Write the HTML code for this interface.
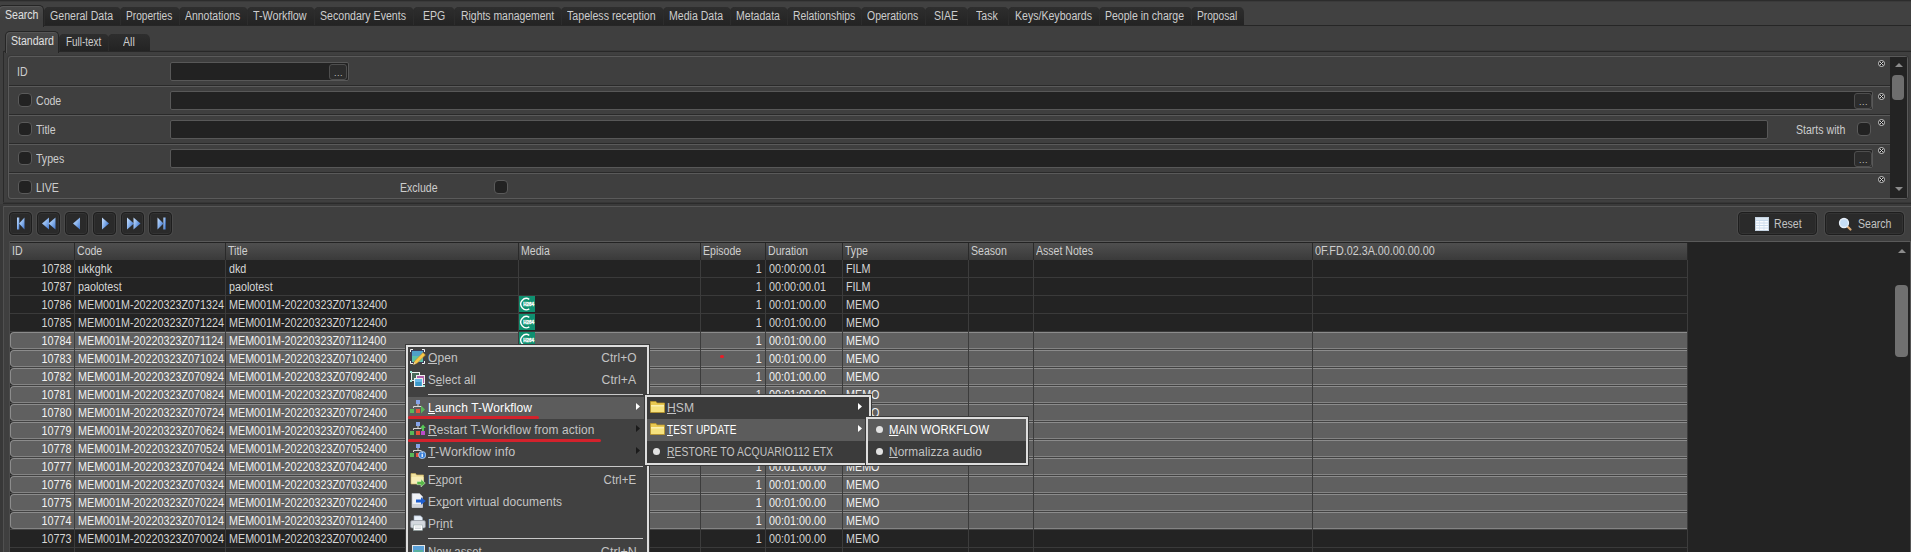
<!DOCTYPE html><html><head><meta charset="utf-8"><title>Search</title><style>
html,body{margin:0;padding:0}
body{width:1911px;height:552px;overflow:hidden;background:#3f3f3f;position:relative;font-family:"Liberation Sans",sans-serif;font-size:12px;color:#cdcdcd}
div,span{box-sizing:border-box}
.a{position:absolute}
.n{position:absolute;white-space:nowrap;transform:scaleX(.88);transform-origin:0 50%;line-height:14px;height:14px}
.r{transform-origin:100% 50%;text-align:right}
.d{transform:scaleX(.897)}
.tab{position:absolute;top:7px;height:18px;background:linear-gradient(#2e2e2e,#232323);border:none;border-radius:5px 5px 0 0;box-shadow:inset 1px 0 0 #2c2c2c}
.tabsel{position:absolute;background:linear-gradient(#4a4a4a,#3f3f3f 70%);border:1px solid #252525;border-bottom:none;border-radius:5px 5px 0 0;box-shadow:inset 1px 1px 0 #565656}
.inp{position:absolute;background:#222;border:1px solid #585858;border-radius:2px}
.db{position:absolute;width:18px;height:16px;background:#2c2c2c;border:1px solid #4e4e4e;border-radius:3px}
.dots{position:absolute;font-size:9px;line-height:10px;letter-spacing:.5px;color:#c4c4c4}
.cb{position:absolute;width:14px;height:14px;background:#222;border:1px solid #5a5a5a;border-radius:4px}
.btn{position:absolute;background:#2a2a2a;border:1px solid #1e1e1e;border-radius:4px;box-shadow:0 0 0 1px #4a4a4a,inset 0 0 0 1px #333}
.hl{position:absolute;height:1px}
.ul{position:absolute;top:16px;height:1px;background:currentColor}
.m{position:absolute;white-space:nowrap;font-size:12px;line-height:22px;height:22px;color:#d4d4d4;letter-spacing:.1px}
</style></head><body>
<div class="a" style="left:0;top:0;width:1911px;height:1px;background:#2c2c2c"></div><div class="a" style="left:0;top:1px;width:1911px;height:1px;background:#3a3a3a"></div><div class="a" style="left:0;top:2px;width:1911px;height:23px;background:#414141"></div>
<div class="a" style="left:0;top:25px;width:1911px;height:1px;background:#262626"></div>
<div class="tabsel" style="left:-2px;top:5px;width:46px;height:22px"></div>
<span class="n" style="left:5px;top:8px;color:#e0e0e0">Search</span>
<div class="tab" style="left:44px;width:77px"></div>
<span class="n" style="left:50px;top:9px;transform:scaleX(0.883)">General Data</span>
<div class="tab" style="left:120px;width:60px"></div>
<span class="n" style="left:126px;top:9px;transform:scaleX(0.845)">Properties</span>
<div class="tab" style="left:179px;width:69px"></div>
<span class="n" style="left:185px;top:9px;transform:scaleX(0.872)">Annotations</span>
<div class="tab" style="left:247px;width:68px"></div>
<span class="n" style="left:253px;top:9px;transform:scaleX(0.897)">T-Workflow</span>
<div class="tab" style="left:314px;width:100px"></div>
<span class="n" style="left:320px;top:9px;transform:scaleX(0.883)">Secondary Events</span>
<div class="tab" style="left:413px;width:42px"></div>
<span class="n" style="left:423px;top:9px;transform:scaleX(0.88)">EPG</span>
<div class="tab" style="left:454px;width:108px"></div>
<span class="n" style="left:461px;top:9px;transform:scaleX(0.868)">Rights management</span>
<div class="tab" style="left:561px;width:103px"></div>
<span class="n" style="left:567px;top:9px;transform:scaleX(0.886)">Tapeless reception</span>
<div class="tab" style="left:663px;width:68px"></div>
<span class="n" style="left:669px;top:9px;transform:scaleX(0.88)">Media Data</span>
<div class="tab" style="left:730px;width:58px"></div>
<span class="n" style="left:736px;top:9px;transform:scaleX(0.879)">Metadata</span>
<div class="tab" style="left:787px;width:75px"></div>
<span class="n" style="left:793px;top:9px;transform:scaleX(0.864)">Relationships</span>
<div class="tab" style="left:861px;width:65px"></div>
<span class="n" style="left:867px;top:9px;transform:scaleX(0.872)">Operations</span>
<div class="tab" style="left:925px;width:43px"></div>
<span class="n" style="left:934px;top:9px;transform:scaleX(0.88)">SIAE</span>
<div class="tab" style="left:967px;width:42px"></div>
<span class="n" style="left:976px;top:9px;transform:scaleX(0.88)">Task</span>
<div class="tab" style="left:1008px;width:92px"></div>
<span class="n" style="left:1015px;top:9px;transform:scaleX(0.881)">Keys/Keyboards</span>
<div class="tab" style="left:1099px;width:93px"></div>
<span class="n" style="left:1105px;top:9px;transform:scaleX(0.877)">People in charge</span>
<div class="tab" style="left:1191px;width:53px"></div>
<span class="n" style="left:1197px;top:9px;transform:scaleX(0.85)">Proposal</span>
<div class="a" style="left:3px;top:51px;width:1908px;height:1px;background:#282828"></div><div class="a" style="left:4px;top:50px;width:1907px;height:1px;background:#393939"></div>
<div class="a" style="left:3px;top:51px;width:1px;height:153px;background:#2a2a2a"></div>
<div class="tabsel" style="left:5px;top:31px;width:54px;height:22px"></div>
<span class="n" style="left:11px;top:34px;color:#e0e0e0">Standard</span>
<div class="tab" style="left:59px;top:34px;width:50px;height:17px"></div>
<span class="n" style="left:66px;top:35px;transform:scaleX(.825)">Full-text</span>
<div class="tab" style="left:108px;top:34px;width:42px;height:17px"></div>
<span class="n" style="left:123px;top:35px">All</span>
<div class="a" style="left:8px;top:56px;width:1900px;height:143px;border:1px solid #5a5a5a;border-radius:3px;box-shadow:0 0 0 1px #383838"></div>
<div class="a" style="left:9px;top:85px;width:1881px;height:1px;background:#2a2a2a"></div>
<div class="a" style="left:9px;top:86px;width:1881px;height:1px;background:#5a5a5a"></div>
<div class="a" style="left:9px;top:114px;width:1881px;height:1px;background:#2a2a2a"></div>
<div class="a" style="left:9px;top:115px;width:1881px;height:1px;background:#5a5a5a"></div>
<div class="a" style="left:9px;top:143px;width:1881px;height:1px;background:#2a2a2a"></div>
<div class="a" style="left:9px;top:144px;width:1881px;height:1px;background:#5a5a5a"></div>
<div class="a" style="left:9px;top:172px;width:1881px;height:1px;background:#2a2a2a"></div>
<div class="a" style="left:9px;top:173px;width:1881px;height:1px;background:#5a5a5a"></div>
<span class="n" style="left:17px;top:65px">ID</span>
<div class="cb" style="left:18px;top:93px"></div>
<span class="n" style="left:36px;top:94px">Code</span>
<div class="cb" style="left:18px;top:122px"></div>
<span class="n" style="left:36px;top:123px">Title</span>
<div class="cb" style="left:18px;top:151px"></div>
<span class="n" style="left:36px;top:152px">Types</span>
<div class="cb" style="left:18px;top:180px"></div>
<span class="n" style="left:36px;top:181px">LIVE</span>
<div class="inp" style="left:170px;top:62px;width:179px;height:19px"></div>
<div class="db" style="left:329px;top:63.5px"></div><span class="dots" style="left:334px;top:68px">...</span>
<div class="inp" style="left:170px;top:91px;width:1703px;height:19px"></div>
<div class="db" style="left:1854px;top:92.5px"></div><span class="dots" style="left:1859px;top:97px">...</span>
<div class="inp" style="left:170px;top:120px;width:1598px;height:19px"></div>
<span class="n" style="left:1796px;top:123px">Starts with</span>
<div class="cb" style="left:1856.500px;top:122px"></div>
<div class="inp" style="left:170px;top:149px;width:1703px;height:19px"></div>
<div class="db" style="left:1854px;top:150.5px"></div><span class="dots" style="left:1859px;top:155px">...</span>
<span class="n" style="left:400px;top:181px">Exclude</span>
<div class="cb" style="left:494px;top:180px"></div>
<svg class="a" style="left:1877.500px;top:60px" width="7" height="7" viewBox="0 0 7 7"><circle cx="3.500" cy="3.500" r="3" fill="#1a1a1a" stroke="#dcdcdc" stroke-width=".9"/><path d="M2 2L5 5M5 2L2 5" stroke="#dcdcdc" stroke-width=".9"/></svg>
<svg class="a" style="left:1877.500px;top:93px" width="7" height="7" viewBox="0 0 7 7"><circle cx="3.500" cy="3.500" r="3" fill="#1a1a1a" stroke="#dcdcdc" stroke-width=".9"/><path d="M2 2L5 5M5 2L2 5" stroke="#dcdcdc" stroke-width=".9"/></svg>
<svg class="a" style="left:1877.500px;top:119px" width="7" height="7" viewBox="0 0 7 7"><circle cx="3.500" cy="3.500" r="3" fill="#1a1a1a" stroke="#dcdcdc" stroke-width=".9"/><path d="M2 2L5 5M5 2L2 5" stroke="#dcdcdc" stroke-width=".9"/></svg>
<svg class="a" style="left:1877.500px;top:147px" width="7" height="7" viewBox="0 0 7 7"><circle cx="3.500" cy="3.500" r="3" fill="#1a1a1a" stroke="#dcdcdc" stroke-width=".9"/><path d="M2 2L5 5M5 2L2 5" stroke="#dcdcdc" stroke-width=".9"/></svg>
<svg class="a" style="left:1877.500px;top:176px" width="7" height="7" viewBox="0 0 7 7"><circle cx="3.500" cy="3.500" r="3" fill="#1a1a1a" stroke="#dcdcdc" stroke-width=".9"/><path d="M2 2L5 5M5 2L2 5" stroke="#dcdcdc" stroke-width=".9"/></svg>
<div class="a" style="left:1890px;top:57px;width:17px;height:141px;background:#232323"></div>
<div class="a" style="left:1892px;top:75px;width:12px;height:25px;background:#6e6e6e;border-radius:4px"></div>
<svg class="a" style="left:1895px;top:63px" width="8" height="4"><path d="M0 4L4 0L8 4z" fill="#8c8c8c"/></svg>
<svg class="a" style="left:1895px;top:187px" width="8" height="4"><path d="M0 0L4 4L8 0z" fill="#8c8c8c"/></svg>
<div class="a" style="left:3px;top:202px;width:1908px;height:1px;background:#363636"></div><div class="a" style="left:3px;top:203px;width:1908px;height:1px;background:#2b2b2b"></div><div class="a" style="left:0;top:204px;width:1911px;height:2px;background:#3a3a3a"></div>
<div class="a" style="left:3px;top:206px;width:1908px;height:1px;background:#565656"></div><div class="a" style="left:3px;top:206px;width:1px;height:346px;background:#505050"></div><div class="a" style="left:0;top:206px;width:3px;height:346px;background:#383838"></div>
<div class="btn" style="left:9px;top:212px;width:23px;height:23px"></div>
<div class="btn" style="left:37px;top:212px;width:23px;height:23px"></div>
<div class="btn" style="left:65px;top:212px;width:23px;height:23px"></div>
<div class="btn" style="left:93px;top:212px;width:23px;height:23px"></div>
<div class="btn" style="left:121px;top:212px;width:23px;height:23px"></div>
<div class="btn" style="left:149px;top:212px;width:23px;height:23px"></div>
<svg class="a" style="left:0;top:212px" width="180" height="23" viewBox="0 0 180 23"><defs><linearGradient id="gl" x1="0" y1="0" x2="1" y2="1"><stop offset="0" stop-color="#c4dcfa"/><stop offset=".5" stop-color="#8db6ee"/><stop offset="1" stop-color="#3f74cc"/></linearGradient><linearGradient id="gr" x1="0" y1="0" x2="1" y2=".6"><stop offset="0" stop-color="#cfe2fb"/><stop offset=".45" stop-color="#8db6ee"/><stop offset="1" stop-color="#3f74cc"/></linearGradient></defs><g transform="translate(0,.5)"><path d="M17 5h2.300v12H17z" fill="url(#gl)"/><path d="M19 11l5.500-6v12z" fill="url(#gl)"/><path d="M42 11l7-6v12z" fill="url(#gl)"/><path d="M48.500 11l7-6v12z" fill="url(#gl)"/><path d="M73 11l7-6v12z" fill="url(#gl)"/><path d="M109 11l-7-6v12z" fill="url(#gr)"/><path d="M134 11l-7-6v12z" fill="url(#gr)"/><path d="M140.500 11l-7-6v12z" fill="url(#gr)"/><path d="M163.400 5h2.300v12h-2.300z" fill="url(#gr)"/><path d="M163.500 11l-6-6v12z" fill="url(#gr)"/></g></svg>
<div class="btn" style="left:1738px;top:212px;width:79px;height:23px"></div>
<svg class="a" style="left:1755px;top:217px" width="14" height="14" viewBox="0 0 14 14"><rect x=".5" y=".5" width="13" height="13" fill="#fafcff" stroke="#c4d2e0"/><path d="M1 3.500h12M1 6h12M1 8.500h12M1 11h12" stroke="#bcd0e6" stroke-width=".8"/><path d="M4.500 3.500v10M9 3.500v10" stroke="#d0deee" stroke-width=".7"/><rect x="1" y="1" width="12" height="2" fill="#dbe7f3"/></svg>
<span class="n" style="left:1774px;top:217px;color:#c2c2c2">Reset</span>
<div class="btn" style="left:1825px;top:212px;width:79px;height:23px"></div>
<svg class="a" style="left:1838px;top:217px" width="15" height="15" viewBox="0 0 15 15"><path d="M9.500 9.500l3 3" stroke="#dba873" stroke-width="2.200" stroke-linecap="round"/><circle cx="6" cy="6" r="4.500" fill="#c6ddf4" stroke="#e6eff9" stroke-width="1.300"/></svg>
<span class="n" style="left:1858px;top:217px;color:#c2c2c2">Search</span>
<div class="a" style="left:10px;top:242px;width:1900px;height:310px;background:#232323"></div>
<div class="a" style="left:9px;top:241px;width:1902px;height:1px;background:#5a5a5a"></div>
<div class="a" style="left:9px;top:241px;width:1px;height:311px;background:#4a4a4a"></div>
<div class="a" style="left:10px;top:243px;width:1678px;height:17px;background:linear-gradient(#4f4f4f,#3a3a3a)"></div>
<div class="a" style="left:74px;top:243px;width:1px;height:17px;background:#2a2a2a"></div>
<span class="n" style="left:12px;top:244px;color:#cfcfcf">ID</span>
<div class="a" style="left:225px;top:243px;width:1px;height:17px;background:#2a2a2a"></div>
<span class="n" style="left:77px;top:244px;color:#cfcfcf">Code</span>
<div class="a" style="left:518px;top:243px;width:1px;height:17px;background:#2a2a2a"></div>
<span class="n" style="left:228px;top:244px;color:#cfcfcf">Title</span>
<div class="a" style="left:700px;top:243px;width:1px;height:17px;background:#2a2a2a"></div>
<span class="n" style="left:521px;top:244px;color:#cfcfcf">Media</span>
<div class="a" style="left:765px;top:243px;width:1px;height:17px;background:#2a2a2a"></div>
<span class="n" style="left:703px;top:244px;color:#cfcfcf">Episode</span>
<div class="a" style="left:842px;top:243px;width:1px;height:17px;background:#2a2a2a"></div>
<span class="n" style="left:768px;top:244px;color:#cfcfcf">Duration</span>
<div class="a" style="left:968px;top:243px;width:1px;height:17px;background:#2a2a2a"></div>
<span class="n" style="left:845px;top:244px;color:#cfcfcf">Type</span>
<div class="a" style="left:1033px;top:243px;width:1px;height:17px;background:#2a2a2a"></div>
<span class="n" style="left:971px;top:244px;color:#cfcfcf">Season</span>
<div class="a" style="left:1312px;top:243px;width:1px;height:17px;background:#2a2a2a"></div>
<span class="n" style="left:1036px;top:244px;color:#cfcfcf">Asset Notes</span>
<div class="a" style="left:1687px;top:243px;width:1px;height:17px;background:#2a2a2a"></div>
<span class="n d" style="left:1315px;top:244px;color:#cfcfcf">0F.FD.02.3A.00.00.00.00</span>
<div class="a" style="left:10px;top:277px;width:1678px;height:1px;background:#3a3a3a"></div>
<span class="n d r" style="right:1840px;top:262px;color:#d6d6d6">10788</span>
<span class="n d" style="left:78px;top:262px;color:#d6d6d6;width:164px;overflow:hidden">ukkghk</span>
<span class="n d" style="left:229px;top:262px;color:#d6d6d6">dkd</span>
<span class="n d r" style="right:1149px;top:262px;color:#d6d6d6">1</span>
<span class="n d" style="left:769px;top:262px;color:#d6d6d6">00:00:00.01</span>
<span class="n d" style="left:846px;top:262px;color:#d6d6d6">FILM</span>
<div class="a" style="left:10px;top:295px;width:1678px;height:1px;background:#3a3a3a"></div>
<span class="n d r" style="right:1840px;top:280px;color:#d6d6d6">10787</span>
<span class="n d" style="left:78px;top:280px;color:#d6d6d6;width:164px;overflow:hidden">paolotest</span>
<span class="n d" style="left:229px;top:280px;color:#d6d6d6">paolotest</span>
<span class="n d r" style="right:1149px;top:280px;color:#d6d6d6">1</span>
<span class="n d" style="left:769px;top:280px;color:#d6d6d6">00:00:00.01</span>
<span class="n d" style="left:846px;top:280px;color:#d6d6d6">FILM</span>
<div class="a" style="left:10px;top:313px;width:1678px;height:1px;background:#3a3a3a"></div>
<span class="n d r" style="right:1840px;top:298px;color:#d6d6d6">10786</span>
<span class="n d" style="left:78px;top:298px;color:#d6d6d6;width:164px;overflow:hidden">MEM001M-20220323Z071324</span>
<span class="n d" style="left:229px;top:298px;color:#d6d6d6">MEM001M-20220323Z07132400</span>
<span class="n d r" style="right:1149px;top:298px;color:#d6d6d6">1</span>
<span class="n d" style="left:769px;top:298px;color:#d6d6d6">00:01:00.00</span>
<span class="n d" style="left:846px;top:298px;color:#d6d6d6">MEMO</span>
<svg class="a" style="left:519px;top:296px" width="16" height="16" viewBox="0 0 16 16"><rect width="16" height="16" fill="#0f9070"/><path d="M10.300 3.300A5.600 5.600 0 1 0 10.300 12.900" fill="none" stroke="#fff" stroke-width="1.400"/><text x="4.300" y="10.100" font-size="5.600" font-weight="bold" fill="#fff" stroke="#fff" stroke-width=".35" font-family="Liberation Sans,sans-serif" textLength="10.800" lengthAdjust="spacingAndGlyphs">H264</text></svg>
<div class="a" style="left:10px;top:331px;width:1678px;height:1px;background:#3a3a3a"></div>
<span class="n d r" style="right:1840px;top:316px;color:#d6d6d6">10785</span>
<span class="n d" style="left:78px;top:316px;color:#d6d6d6;width:164px;overflow:hidden">MEM001M-20220323Z071224</span>
<span class="n d" style="left:229px;top:316px;color:#d6d6d6">MEM001M-20220323Z07122400</span>
<span class="n d r" style="right:1149px;top:316px;color:#d6d6d6">1</span>
<span class="n d" style="left:769px;top:316px;color:#d6d6d6">00:01:00.00</span>
<span class="n d" style="left:846px;top:316px;color:#d6d6d6">MEMO</span>
<svg class="a" style="left:519px;top:314px" width="16" height="16" viewBox="0 0 16 16"><rect width="16" height="16" fill="#0f9070"/><path d="M10.300 3.300A5.600 5.600 0 1 0 10.300 12.900" fill="none" stroke="#fff" stroke-width="1.400"/><text x="4.300" y="10.100" font-size="5.600" font-weight="bold" fill="#fff" stroke="#fff" stroke-width=".35" font-family="Liberation Sans,sans-serif" textLength="10.800" lengthAdjust="spacingAndGlyphs">H264</text></svg>
<div class="a" style="left:10px;top:332px;width:1678px;height:17px;background:#606060;border-top:1px solid #8c8c8c;border-bottom:1px solid #848484;border-left:1px solid #8c8c8c;border-radius:4px 0 0 4px"></div>
<div class="a" style="left:10px;top:349px;width:1678px;height:1px;background:#424242"></div>
<span class="n d r" style="right:1840px;top:334px;color:#f2f2f2">10784</span>
<span class="n d" style="left:78px;top:334px;color:#f2f2f2;width:164px;overflow:hidden">MEM001M-20220323Z071124</span>
<span class="n d" style="left:229px;top:334px;color:#f2f2f2">MEM001M-20220323Z07112400</span>
<span class="n d r" style="right:1149px;top:334px;color:#f2f2f2">1</span>
<span class="n d" style="left:769px;top:334px;color:#f2f2f2">00:01:00.00</span>
<span class="n d" style="left:846px;top:334px;color:#f2f2f2">MEMO</span>
<svg class="a" style="left:519px;top:332px" width="16" height="16" viewBox="0 0 16 16"><rect width="16" height="16" fill="#0f9070"/><path d="M10.300 3.300A5.600 5.600 0 1 0 10.300 12.900" fill="none" stroke="#fff" stroke-width="1.400"/><text x="4.300" y="10.100" font-size="5.600" font-weight="bold" fill="#fff" stroke="#fff" stroke-width=".35" font-family="Liberation Sans,sans-serif" textLength="10.800" lengthAdjust="spacingAndGlyphs">H264</text></svg>
<div class="a" style="left:10px;top:350px;width:1678px;height:17px;background:#606060;border-top:1px solid #8c8c8c;border-bottom:1px solid #848484;border-left:1px solid #8c8c8c;border-radius:4px 0 0 4px"></div>
<div class="a" style="left:10px;top:367px;width:1678px;height:1px;background:#424242"></div>
<span class="n d r" style="right:1840px;top:352px;color:#f2f2f2">10783</span>
<span class="n d" style="left:78px;top:352px;color:#f2f2f2;width:164px;overflow:hidden">MEM001M-20220323Z071024</span>
<span class="n d" style="left:229px;top:352px;color:#f2f2f2">MEM001M-20220323Z07102400</span>
<span class="n d r" style="right:1149px;top:352px;color:#f2f2f2">1</span>
<span class="n d" style="left:769px;top:352px;color:#f2f2f2">00:01:00.00</span>
<span class="n d" style="left:846px;top:352px;color:#f2f2f2">MEMO</span>
<div class="a" style="left:10px;top:368px;width:1678px;height:17px;background:#606060;border-top:1px solid #8c8c8c;border-bottom:1px solid #848484;border-left:1px solid #8c8c8c;border-radius:4px 0 0 4px"></div>
<div class="a" style="left:10px;top:385px;width:1678px;height:1px;background:#424242"></div>
<span class="n d r" style="right:1840px;top:370px;color:#f2f2f2">10782</span>
<span class="n d" style="left:78px;top:370px;color:#f2f2f2;width:164px;overflow:hidden">MEM001M-20220323Z070924</span>
<span class="n d" style="left:229px;top:370px;color:#f2f2f2">MEM001M-20220323Z07092400</span>
<span class="n d r" style="right:1149px;top:370px;color:#f2f2f2">1</span>
<span class="n d" style="left:769px;top:370px;color:#f2f2f2">00:01:00.00</span>
<span class="n d" style="left:846px;top:370px;color:#f2f2f2">MEMO</span>
<div class="a" style="left:10px;top:386px;width:1678px;height:17px;background:#606060;border-top:1px solid #8c8c8c;border-bottom:1px solid #848484;border-left:1px solid #8c8c8c;border-radius:4px 0 0 4px"></div>
<div class="a" style="left:10px;top:403px;width:1678px;height:1px;background:#424242"></div>
<span class="n d r" style="right:1840px;top:388px;color:#f2f2f2">10781</span>
<span class="n d" style="left:78px;top:388px;color:#f2f2f2;width:164px;overflow:hidden">MEM001M-20220323Z070824</span>
<span class="n d" style="left:229px;top:388px;color:#f2f2f2">MEM001M-20220323Z07082400</span>
<span class="n d r" style="right:1149px;top:388px;color:#f2f2f2">1</span>
<span class="n d" style="left:769px;top:388px;color:#f2f2f2">00:01:00.00</span>
<span class="n d" style="left:846px;top:388px;color:#f2f2f2">MEMO</span>
<div class="a" style="left:10px;top:404px;width:1678px;height:17px;background:#606060;border-top:1px solid #8c8c8c;border-bottom:1px solid #848484;border-left:1px solid #8c8c8c;border-radius:4px 0 0 4px"></div>
<div class="a" style="left:10px;top:421px;width:1678px;height:1px;background:#424242"></div>
<span class="n d r" style="right:1840px;top:406px;color:#f2f2f2">10780</span>
<span class="n d" style="left:78px;top:406px;color:#f2f2f2;width:164px;overflow:hidden">MEM001M-20220323Z070724</span>
<span class="n d" style="left:229px;top:406px;color:#f2f2f2">MEM001M-20220323Z07072400</span>
<span class="n d r" style="right:1149px;top:406px;color:#f2f2f2">1</span>
<span class="n d" style="left:769px;top:406px;color:#f2f2f2">00:01:00.00</span>
<span class="n d" style="left:846px;top:406px;color:#f2f2f2">MEMO</span>
<div class="a" style="left:10px;top:422px;width:1678px;height:17px;background:#606060;border-top:1px solid #8c8c8c;border-bottom:1px solid #848484;border-left:1px solid #8c8c8c;border-radius:4px 0 0 4px"></div>
<div class="a" style="left:10px;top:439px;width:1678px;height:1px;background:#424242"></div>
<span class="n d r" style="right:1840px;top:424px;color:#f2f2f2">10779</span>
<span class="n d" style="left:78px;top:424px;color:#f2f2f2;width:164px;overflow:hidden">MEM001M-20220323Z070624</span>
<span class="n d" style="left:229px;top:424px;color:#f2f2f2">MEM001M-20220323Z07062400</span>
<span class="n d r" style="right:1149px;top:424px;color:#f2f2f2">1</span>
<span class="n d" style="left:769px;top:424px;color:#f2f2f2">00:01:00.00</span>
<span class="n d" style="left:846px;top:424px;color:#f2f2f2">MEMO</span>
<div class="a" style="left:10px;top:440px;width:1678px;height:17px;background:#606060;border-top:1px solid #8c8c8c;border-bottom:1px solid #848484;border-left:1px solid #8c8c8c;border-radius:4px 0 0 4px"></div>
<div class="a" style="left:10px;top:457px;width:1678px;height:1px;background:#424242"></div>
<span class="n d r" style="right:1840px;top:442px;color:#f2f2f2">10778</span>
<span class="n d" style="left:78px;top:442px;color:#f2f2f2;width:164px;overflow:hidden">MEM001M-20220323Z070524</span>
<span class="n d" style="left:229px;top:442px;color:#f2f2f2">MEM001M-20220323Z07052400</span>
<span class="n d r" style="right:1149px;top:442px;color:#f2f2f2">1</span>
<span class="n d" style="left:769px;top:442px;color:#f2f2f2">00:01:00.00</span>
<span class="n d" style="left:846px;top:442px;color:#f2f2f2">MEMO</span>
<div class="a" style="left:10px;top:458px;width:1678px;height:17px;background:#606060;border-top:1px solid #8c8c8c;border-bottom:1px solid #848484;border-left:1px solid #8c8c8c;border-radius:4px 0 0 4px"></div>
<div class="a" style="left:10px;top:475px;width:1678px;height:1px;background:#424242"></div>
<span class="n d r" style="right:1840px;top:460px;color:#f2f2f2">10777</span>
<span class="n d" style="left:78px;top:460px;color:#f2f2f2;width:164px;overflow:hidden">MEM001M-20220323Z070424</span>
<span class="n d" style="left:229px;top:460px;color:#f2f2f2">MEM001M-20220323Z07042400</span>
<span class="n d r" style="right:1149px;top:460px;color:#f2f2f2">1</span>
<span class="n d" style="left:769px;top:460px;color:#f2f2f2">00:01:00.00</span>
<span class="n d" style="left:846px;top:460px;color:#f2f2f2">MEMO</span>
<div class="a" style="left:10px;top:476px;width:1678px;height:17px;background:#606060;border-top:1px solid #8c8c8c;border-bottom:1px solid #848484;border-left:1px solid #8c8c8c;border-radius:4px 0 0 4px"></div>
<div class="a" style="left:10px;top:493px;width:1678px;height:1px;background:#424242"></div>
<span class="n d r" style="right:1840px;top:478px;color:#f2f2f2">10776</span>
<span class="n d" style="left:78px;top:478px;color:#f2f2f2;width:164px;overflow:hidden">MEM001M-20220323Z070324</span>
<span class="n d" style="left:229px;top:478px;color:#f2f2f2">MEM001M-20220323Z07032400</span>
<span class="n d r" style="right:1149px;top:478px;color:#f2f2f2">1</span>
<span class="n d" style="left:769px;top:478px;color:#f2f2f2">00:01:00.00</span>
<span class="n d" style="left:846px;top:478px;color:#f2f2f2">MEMO</span>
<div class="a" style="left:10px;top:494px;width:1678px;height:17px;background:#606060;border-top:1px solid #8c8c8c;border-bottom:1px solid #848484;border-left:1px solid #8c8c8c;border-radius:4px 0 0 4px"></div>
<div class="a" style="left:10px;top:511px;width:1678px;height:1px;background:#424242"></div>
<span class="n d r" style="right:1840px;top:496px;color:#f2f2f2">10775</span>
<span class="n d" style="left:78px;top:496px;color:#f2f2f2;width:164px;overflow:hidden">MEM001M-20220323Z070224</span>
<span class="n d" style="left:229px;top:496px;color:#f2f2f2">MEM001M-20220323Z07022400</span>
<span class="n d r" style="right:1149px;top:496px;color:#f2f2f2">1</span>
<span class="n d" style="left:769px;top:496px;color:#f2f2f2">00:01:00.00</span>
<span class="n d" style="left:846px;top:496px;color:#f2f2f2">MEMO</span>
<div class="a" style="left:10px;top:512px;width:1678px;height:17px;background:#606060;border-top:1px solid #8c8c8c;border-bottom:1px solid #848484;border-left:1px solid #8c8c8c;border-radius:4px 0 0 4px"></div>
<div class="a" style="left:10px;top:529px;width:1678px;height:1px;background:#424242"></div>
<span class="n d r" style="right:1840px;top:514px;color:#f2f2f2">10774</span>
<span class="n d" style="left:78px;top:514px;color:#f2f2f2;width:164px;overflow:hidden">MEM001M-20220323Z070124</span>
<span class="n d" style="left:229px;top:514px;color:#f2f2f2">MEM001M-20220323Z07012400</span>
<span class="n d r" style="right:1149px;top:514px;color:#f2f2f2">1</span>
<span class="n d" style="left:769px;top:514px;color:#f2f2f2">00:01:00.00</span>
<span class="n d" style="left:846px;top:514px;color:#f2f2f2">MEMO</span>
<div class="a" style="left:10px;top:547px;width:1678px;height:1px;background:#3a3a3a"></div>
<span class="n d r" style="right:1840px;top:532px;color:#d6d6d6">10773</span>
<span class="n d" style="left:78px;top:532px;color:#d6d6d6;width:164px;overflow:hidden">MEM001M-20220323Z070024</span>
<span class="n d" style="left:229px;top:532px;color:#d6d6d6">MEM001M-20220323Z07002400</span>
<span class="n d r" style="right:1149px;top:532px;color:#d6d6d6">1</span>
<span class="n d" style="left:769px;top:532px;color:#d6d6d6">00:01:00.00</span>
<span class="n d" style="left:846px;top:532px;color:#d6d6d6">MEMO</span>
<div class="a" style="left:10px;top:565px;width:1678px;height:1px;background:#3a3a3a"></div>
<span class="n d r" style="right:1840px;top:550px;color:#d6d6d6">10772</span>
<span class="n d" style="left:78px;top:550px;color:#d6d6d6;width:164px;overflow:hidden">MEM001M-20220323Z065924</span>
<span class="n d" style="left:229px;top:550px;color:#d6d6d6">MEM001M-20220323Z06592400</span>
<span class="n d r" style="right:1149px;top:550px;color:#d6d6d6">1</span>
<span class="n d" style="left:769px;top:550px;color:#d6d6d6">00:01:00.00</span>
<span class="n d" style="left:846px;top:550px;color:#d6d6d6">MEMO</span>
<div class="a" style="left:74px;top:260px;width:1px;height:292px;background:#3c3c3c"></div>
<div class="a" style="left:225px;top:260px;width:1px;height:292px;background:#3c3c3c"></div>
<div class="a" style="left:518px;top:260px;width:1px;height:292px;background:#3c3c3c"></div>
<div class="a" style="left:700px;top:260px;width:1px;height:292px;background:#3c3c3c"></div>
<div class="a" style="left:765px;top:260px;width:1px;height:292px;background:#3c3c3c"></div>
<div class="a" style="left:842px;top:260px;width:1px;height:292px;background:#3c3c3c"></div>
<div class="a" style="left:968px;top:260px;width:1px;height:292px;background:#3c3c3c"></div>
<div class="a" style="left:1033px;top:260px;width:1px;height:292px;background:#3c3c3c"></div>
<div class="a" style="left:1312px;top:260px;width:1px;height:292px;background:#3c3c3c"></div>
<div class="a" style="left:1687px;top:260px;width:1px;height:292px;background:#3c3c3c"></div>
<div class="a" style="left:1910px;top:241px;width:1px;height:311px;background:#555"></div>
<svg class="a" style="left:1898px;top:248.500px" width="8" height="4"><path d="M0 4L4 0L8 4z" fill="#8c8c8c"/></svg>
<div class="a" style="left:1895px;top:285px;width:13px;height:72px;background:#707070;border-radius:4px"></div>
<div class="a" style="left:406px;top:345px;width:243px;height:220px;background:#414141;border:2px solid #dedede;box-shadow:0 0 0 1px #3a3a3a"></div>
<div class="a" style="left:408px;top:397px;width:237px;height:22px;background:#5c5c5c"></div>
<div class="a" style="left:428px;top:394px;width:215px;height:1px;background:#c8c8c8"></div>
<div class="a" style="left:428px;top:466px;width:215px;height:1px;background:#c8c8c8"></div>
<div class="a" style="left:428px;top:538px;width:215px;height:1px;background:#c8c8c8"></div>
<span class="m" style="left:428px;top:347px;color:#c4c4c4;transform:scaleX(1.0);transform-origin:0 50%">Open<i class="ul" style="left:0px;width:9.34px"></i></span>
<span class="m" style="right:1274.5px;top:347px;color:#c4c4c4;transform:scaleX(0.994);transform-origin:100% 50%">Ctrl+O</span>
<span class="m" style="left:428px;top:369px;color:#c4c4c4;transform:scaleX(0.965);transform-origin:0 50%">Select all<i class="ul" style="left:8px;width:6.69px"></i></span>
<span class="m" style="right:1274.5px;top:369px;color:#c4c4c4;transform:scaleX(1.015);transform-origin:100% 50%">Ctrl+A</span>
<span class="m" style="left:428px;top:397px;color:#ffffff;transform:scaleX(1.0);transform-origin:0 50%">Launch T-Workflow<i class="ul" style="left:0px;width:6.69px"></i></span>
<span class="m" style="left:428px;top:419px;color:#c4c4c4;transform:scaleX(0.995);transform-origin:0 50%">Restart T-Workflow from action<i class="ul" style="left:0px;width:8.67px"></i></span>
<span class="m" style="left:428px;top:441px;color:#c4c4c4;transform:scaleX(1.04);transform-origin:0 50%">T-Workflow info<i class="ul" style="left:0px;width:6.67px"></i></span>
<span class="m" style="left:428px;top:469px;color:#c4c4c4;transform:scaleX(0.963);transform-origin:0 50%">Export<i class="ul" style="left:8px;width:6.02px"></i></span>
<span class="m" style="right:1274.5px;top:469px;color:#c4c4c4;transform:scaleX(0.956);transform-origin:100% 50%">Ctrl+E</span>
<span class="m" style="left:428px;top:491px;color:#c4c4c4;transform:scaleX(0.998);transform-origin:0 50%">Export virtual documents<i class="ul" style="left:14px;width:6.69px"></i></span>
<span class="m" style="left:428px;top:513px;color:#c4c4c4;transform:scaleX(0.992);transform-origin:0 50%">Print<i class="ul" style="left:12px;width:2.67px"></i></span>
<span class="m" style="left:428px;top:541px;color:#c4c4c4;transform:scaleX(0.946);transform-origin:0 50%">New asset<i class="ul" style="left:0px;width:8.67px"></i></span>
<span class="m" style="right:1274.5px;top:541px;color:#c4c4c4;transform:scaleX(1.034);transform-origin:100% 50%">Ctrl+N</span>
<svg class="a" style="left:636px;top:403px"  width="4" height="7"><path d="M0 0L4 3.500L0 7z" fill="#fff"/></svg>
<svg class="a" style="left:636px;top:425px"  width="4" height="7"><path d="M0 0L4 3.500L0 7z" fill="#1a1a1a"/></svg>
<svg class="a" style="left:636px;top:447px"  width="4" height="7"><path d="M0 0L4 3.500L0 7z" fill="#1a1a1a"/></svg>
<svg class="a" style="left:410px;top:349px" width="16" height="16" viewBox="0 0 16 16"><rect x="2" y="2" width="11" height="11" fill="#4f9fc8"/><rect x="2" y="7" width="11" height="6" fill="#5cc0a8"/><rect x="1.500" y="1.500" width="12" height="12" fill="none" stroke="#3a3a5a" stroke-width="1"/><path d="M.5 3V.5H3M12 .5h2.500V3M.5 12v2.500H3M12 14.500h2.500V12" fill="none" stroke="#f4f4f4" stroke-width="1"/><path d="M3.500 15.500l1.200-3.600 8.300-8.300 2.400 2.400-8.300 8.300z" fill="#f6c648" stroke="#b8862a" stroke-width=".6"/><path d="M3.500 15.500l.8-2.400 1.600 1.600z" fill="#e8d8b0"/></svg>
<svg class="a" style="left:410px;top:371px" width="16" height="16" viewBox="0 0 16 16"><rect x="1.500" y="1.500" width="8" height="8" fill="#4a6a5a" stroke="#f0f0f0"/><rect x="6.500" y="4.500" width="8" height="8" fill="#b060a8" stroke="#f0f0f0"/><rect x="4.500" y="7.500" width="8" height="8" fill="#68b8e8" stroke="#f0f0f0"/><rect x="5.500" y="11" width="6" height="4" fill="#3a98c8"/><path d="M0 0h2v2H0zM0 9h2v2H0zM13 14h2v2h-2z" fill="#9fe8d8"/></svg>
<svg class="a" style="left:410px;top:399px" width="16" height="16" viewBox="0 0 16 16"><path d="M8 5v2M3.500 9V7.500h8" fill="none" stroke="#d8d8d8" stroke-width="1"/><rect x="6" y="1" width="4" height="4" fill="#86a4ea"/><rect x="0" y="10" width="4" height="4" fill="#58b858"/><rect x="6" y="10" width="4" height="4" fill="#e4523a"/><path d="M11 6.500l4 4-4 4z" fill="#58b858"/></svg>
<svg class="a" style="left:410px;top:421px" width="16" height="16" viewBox="0 0 16 16"><path d="M8 5v2M3.500 9V7.500h8" fill="none" stroke="#d8d8d8" stroke-width="1"/><rect x="6" y="1" width="4" height="4" fill="#86a4ea"/><rect x="0" y="10" width="4" height="4" fill="#58b858"/><rect x="6" y="10" width="4" height="4" fill="#e4523a"/><path d="M13 3.500l2.800 3.500h-1.800v3h-2v-3h-1.800z" fill="#58c858"/><rect x="11" y="10" width="4" height="4" fill="#b84cc8"/></svg>
<svg class="a" style="left:410px;top:443px" width="16" height="16" viewBox="0 0 16 16"><path d="M8 5v2M3.500 9V7.500h8" fill="none" stroke="#d8d8d8" stroke-width="1"/><rect x="6" y="1" width="4" height="4" fill="#86a4ea"/><rect x="0" y="10" width="4" height="4" fill="#58b858"/><rect x="6" y="10" width="4" height="4" fill="#e4523a"/><circle cx="12.200" cy="12" r="3.600" fill="#3a80d8" stroke="#bcd8f4" stroke-width=".8"/><path d="M12.200 11v3M12.200 9.300v1" stroke="#fff" stroke-width="1.200"/></svg>
<svg class="a" style="left:410px;top:471px" width="16" height="16" viewBox="0 0 16 16"><path d="M1 2.500h4.500l1 1.500h7v9H1z" fill="#f0e2a0" stroke="#c8b060" stroke-width=".7"/><path d="M1.500 6h12v6.500h-12z" fill="#f8eeb8"/><path d="M7 10.500h4v-2.300l4.300 3.900-4.300 3.900v-2.300H7z" fill="#58b848" stroke="#d8f0d0" stroke-width=".5"/></svg>
<svg class="a" style="left:410px;top:493px" width="16" height="16" viewBox="0 0 16 16"><path d="M2 .5h7.500l3 3V14.500H2z" fill="#f0f2f6" stroke="#b8bcc4" stroke-width=".7"/><path d="M2 11h10.500v3.500H2z" fill="#d0d4dc"/><path d="M6 6.500h5V4.300l4.800 3.700-4.800 3.700V9.500H6z" fill="#1e5ed0"/></svg>
<svg class="a" style="left:410px;top:515px" width="16" height="16" viewBox="0 0 16 16"><path d="M4 .8h6.500l2 2V6H4z" fill="#e8f0fa" stroke="#9aa8b8" stroke-width=".6"/><rect x=".6" y="5.500" width="14.800" height="7.500" rx="1.500" fill="#d4d8de" stroke="#8a8e96" stroke-width=".7"/><rect x="3.500" y="10" width="9" height="5.300" fill="#fff" stroke="#9aa" stroke-width=".6"/><path d="M5 12h6M5 13.500h6" stroke="#b8c0c8" stroke-width=".6"/></svg>
<svg class="a" style="left:410px;top:543px" width="16" height="16" viewBox="0 0 16 16"><rect x="2.500" y="2.500" width="12" height="11" fill="#5aa0d8" stroke="#e6e6e6"/><rect x="4" y="7" width="9" height="5" fill="#58b0a0"/></svg>
<div class="a" style="left:408px;top:416px;width:130.500px;height:3px;background:#d3222c;border-radius:2px"></div>
<div class="a" style="left:408px;top:439px;width:192.500px;height:3px;background:#d3222c;border-radius:2px"></div>
<div class="a" style="left:645px;top:395px;width:226px;height:70px;background:#3b3b3b;border:2px solid #dedede;box-shadow:0 0 0 1px #3a3a3a"></div>
<div class="a" style="left:647px;top:419px;width:222px;height:22px;background:#5c5c5c"></div>
<svg class="a" style="left:650px;top:399px" width="16" height="16" viewBox="0 0 16 16"><path d="M.5 2.500h5.500l1 1.500h7.500v9.500H.5z" fill="#e8c850" stroke="#c09a28" stroke-width=".7"/><path d="M1 6h13v7h-13z" fill="#f6e27e"/><path d="M1 6h13v1.500h-13z" fill="#fbf0b0"/></svg>
<svg class="a" style="left:650px;top:421px" width="16" height="16" viewBox="0 0 16 16"><path d="M.5 2.500h5.500l1 1.500h7.500v9.500H.5z" fill="#e8c850" stroke="#c09a28" stroke-width=".7"/><path d="M1 6h13v7h-13z" fill="#f6e27e"/><path d="M1 6h13v1.500h-13z" fill="#fbf0b0"/></svg>
<div class="a" style="left:653px;top:448px;width:7px;height:7px;border-radius:4px;background:#e2e2e2"></div>
<span class="m" style="left:667px;top:397px;color:#c4c4c4;transform:scaleX(1.01);transform-origin:0 50%">HSM<i class="ul" style="left:0px;width:8.67px"></i></span>
<span class="m" style="left:667px;top:419px;color:#fff;transform:scaleX(0.843);transform-origin:0 50%">TEST UPDATE<i class="ul" style="left:0px;width:7.34px"></i></span>
<span class="m" style="left:667px;top:441px;color:#c4c4c4;transform:scaleX(0.863);transform-origin:0 50%">RESTORE TO ACQUARIO112 ETX<i class="ul" style="left:0px;width:8.67px"></i></span>
<svg class="a" style="left:858px;top:403px"  width="4" height="7"><path d="M0 0L4 3.500L0 7z" fill="#fff"/></svg>
<svg class="a" style="left:858px;top:425px"  width="4" height="7"><path d="M0 0L4 3.500L0 7z" fill="#fff"/></svg>
<div class="a" style="left:866px;top:417px;width:161.5px;height:48px;background:#3b3b3b;border:2px solid #dedede;box-shadow:0 0 0 1px #3a3a3a"></div>
<div class="a" style="left:868px;top:419px;width:157.500px;height:22px;background:#5c5c5c"></div>
<div class="a" style="left:876px;top:426px;width:7px;height:7px;border-radius:4px;background:#e2e2e2"></div>
<div class="a" style="left:876px;top:448px;width:7px;height:7px;border-radius:4px;background:#e2e2e2"></div>
<span class="m" style="left:889px;top:419px;color:#fff;transform:scaleX(0.94);transform-origin:0 50%">MAIN WORKFLOW<i class="ul" style="left:0px;width:10px"></i></span>
<span class="m" style="left:889px;top:441px;color:#c4c4c4;transform:scaleX(0.985);transform-origin:0 50%">Normalizza audio<i class="ul" style="left:0px;width:8.67px"></i></span>
<div class="a" style="left:720px;top:355px;width:4px;height:3px;background:#ea1c26;border-radius:1.500px"></div>
</body></html>
